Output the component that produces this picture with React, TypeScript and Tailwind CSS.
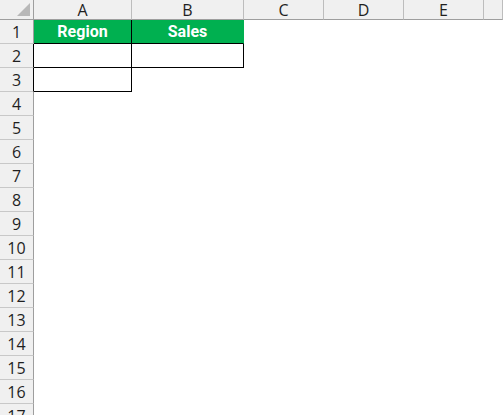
import React from 'react';

const cols = ['A', 'B', 'C', 'D', 'E', ''];
const rows = Array.from({ length: 17 }, (_, i) => i + 1);

const headFont = { fontFamily: '"Open Sans", "Noto Sans", sans-serif' };

// which cells carry black borders / fill
const cellClass = (r: number, c: number) => {
  if (r === 1 && c === 0) return 'bg-[#00B050] border-r border-b border-black';
  if (r === 1 && c === 1) return 'bg-[#00B050] border-r border-b border-r-[#00B050] border-b-black';
  if (r === 2 && c < 2) return 'border-r border-b border-black';
  if (r === 3 && c === 0) return 'border-r border-b border-black';
  return '';
};

const cellText = (r: number, c: number) => {
  if (r === 1 && c === 0) return 'Region';
  if (r === 1 && c === 1) return 'Sales';
  return '';
};

export default function App() {
  return (
    <div className="w-[503px] h-[415px] overflow-hidden bg-white">
      <div className="grid grid-cols-[34px_98px_112px_80px_80px_80px_1fr] grid-rows-[20px_repeat(17,24px)]">
        <div className="bg-[#F0F0F0] border-r border-b border-[#9E9E9E] relative">
          <div className="absolute right-[3px] bottom-[3px] w-0 h-0 border-l-[13px] border-l-transparent border-b-[13px] border-b-[#B8B8B8]" />
        </div>
        {cols.map((c, i) => (
          <div
            key={i}
            style={headFont}
            className="bg-[#F0F0F0] border-r border-r-[#BDBDBD] border-b border-b-[#9E9E9E] flex items-center justify-center text-[16px] text-[#1F1F1F] leading-none pt-px"
          >
            {c}
          </div>
        ))}
        {rows.map((r) => (
          <React.Fragment key={r}>
            <div
              style={headFont}
              className={`bg-[#F0F0F0] border-b border-b-[#C8C8C8] border-r flex items-center justify-center text-[16px] text-[#1F1F1F] leading-none pt-px ${
                r === 2 || r === 3 ? 'border-r-black' : 'border-r-[#9E9E9E]'
              }`}
            >
              {r}
            </div>
            {cols.map((c, ci) => (
              <div
                key={ci}
                className={`flex items-center justify-center text-white font-bold text-[16px] leading-none pt-px ${cellClass(r, ci)}`}
                style={{ fontFamily: 'Roboto, "Liberation Sans", sans-serif' }}
              >
                {cellText(r, ci)}
              </div>
            ))}
          </React.Fragment>
        ))}
      </div>
    </div>
  );
}
